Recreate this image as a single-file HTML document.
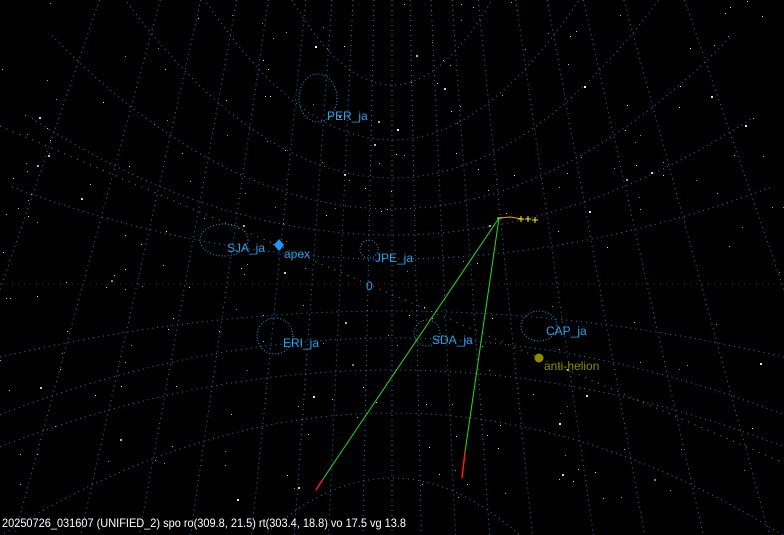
<!DOCTYPE html>
<html><head><meta charset="utf-8">
<style>
html,body{margin:0;padding:0;background:#000;width:784px;height:535px;overflow:hidden}
svg{display:block}
text{font-family:"Liberation Sans","DejaVu Sans",sans-serif;font-size:12px}
</style></head>
<body>
<svg id="s" width="784" height="535" viewBox="0 0 784 535" xmlns="http://www.w3.org/2000/svg">
<rect width="784" height="535" fill="#000"/>
<g id="stars"></g>
<g id="grid" fill="none" stroke="#1880c4" stroke-width="1" stroke-dasharray="1 4"></g>
<line x1="0" y1="284" x2="784" y2="284" stroke="#b00000" stroke-dasharray="1 5"/>
<line x1="0" y1="126" x2="784" y2="463" stroke="#8c8c00" stroke-dasharray="1 6"/>
<g fill="none" stroke="#1a9ee8" stroke-dasharray="1 2">
<ellipse cx="318" cy="98" rx="19" ry="24"/>
<ellipse cx="224" cy="240" rx="24" ry="16"/>
<circle cx="369" cy="249" r="9"/>
<ellipse cx="275" cy="336" rx="18" ry="18"/>
<circle cx="427" cy="333" r="13"/>
<ellipse cx="539" cy="326" rx="18" ry="15"/>
</g>
<g fill="#1fa3ee">
<text x="327" y="120">PER_ja</text>
<text x="227" y="252">SJA_ja</text>
<text x="284" y="258">apex</text>
<text x="375" y="262">JPE_ja</text>
<text x="366" y="290">0</text>
<text x="283" y="347">ERI_ja</text>
<text x="432" y="344">SDA_ja</text>
<text x="546" y="335">CAP_ja</text>
</g>
<polygon points="279,239 284,245 279,251 274,245" fill="#1e96ff"/>
<circle cx="539" cy="358" r="4.5" fill="#8c8c00"/>
<text x="544" y="370" fill="#8c8c00">anti-helion</text>
<line x1="499" y1="218" x2="321" y2="482" stroke="#22dd22"/>
<line x1="499" y1="218" x2="465" y2="452" stroke="#22dd22"/>
<line x1="323" y1="479" x2="316" y2="490" stroke="#ff1a1a" stroke-width="1.5"/>
<line x1="465" y1="452" x2="462" y2="478" stroke="#ff1a1a" stroke-width="1.5"/>
<polyline points="499,218 510,217 522,219" fill="none" stroke="#ff9900"/>
<g stroke="#ffee00">
<line x1="497" y1="218" x2="502" y2="218"/>
<line x1="518" y1="219" x2="524" y2="219"/><line x1="521" y1="216" x2="521" y2="222"/>
<line x1="525" y1="219" x2="531" y2="219"/><line x1="528" y1="216" x2="528" y2="222"/>
<line x1="532" y1="220" x2="538" y2="220"/><line x1="535" y1="217" x2="535" y2="223"/>
</g>
<text x="2" y="527" fill="#ffffff" textLength="404" lengthAdjust="spacingAndGlyphs">20250726_031607 (UNIFIED_2) spo ro(309.8, 21.5) rt(303.4, 18.8) vo 17.5 vg 13.8</text>
</svg>
<script>
var NS="http://www.w3.org/2000/svg";
var g=document.getElementById("grid");
function path(d){var p=document.createElementNS(NS,"path");p.setAttribute("d",d);g.appendChild(p);}
var cx=392,cy=284;
var lats=[[85,0.0085,1,300],[140,0.004,1,300],[178,0.0025,1,320],[209,0.0015,1,340],[235,0.0009,1,360],[259,0.0005,1,380],
[311,0.0003,-1,400],[338,0.0005,-1,400],[370,0.0005,-1,400],[413,0.0008,-1,400],[478,0.0035,-1,400]];
lats.forEach(function(l){var d="";for(var x=0;x<=784;x+=4){if(Math.abs(x-cx)>l[3])continue;var y=l[0]-l[2]*l[1]*(x-cx)*(x-cx);if(y<-5||y>540)continue;d+=(d?"L":"M")+x+" "+y.toFixed(1);}if(d)path(d);});
var offs=[0,24,52,80,115,165,207,255,309,390];
offs.forEach(function(o){[1,-1].forEach(function(sg){if(o==0&&sg<0)return;var t0=-1,t1=(535-cy)/284;var x0=cx+sg*o*(1+0.25*t0),x1=cx+sg*o*(1+0.25*t1);path("M"+x0.toFixed(1)+" 0L"+x1.toFixed(1)+" 535");});});
var st=document.getElementById("stars");var seed=12345;function r(){seed=(seed*16807)%2147483647;return seed/2147483647;}
for(var i=0;i<260;i++){var c=document.createElementNS(NS,"rect");var sz=r()<0.15?2:1;c.setAttribute("x",(r()*784).toFixed(0));c.setAttribute("y",(r()*505).toFixed(0));c.setAttribute("width",sz);c.setAttribute("height",sz);var b=Math.floor(120+r()*135);c.setAttribute("fill","rgb("+b+","+b+","+b+")");st.appendChild(c);}
</script>
</body></html>
